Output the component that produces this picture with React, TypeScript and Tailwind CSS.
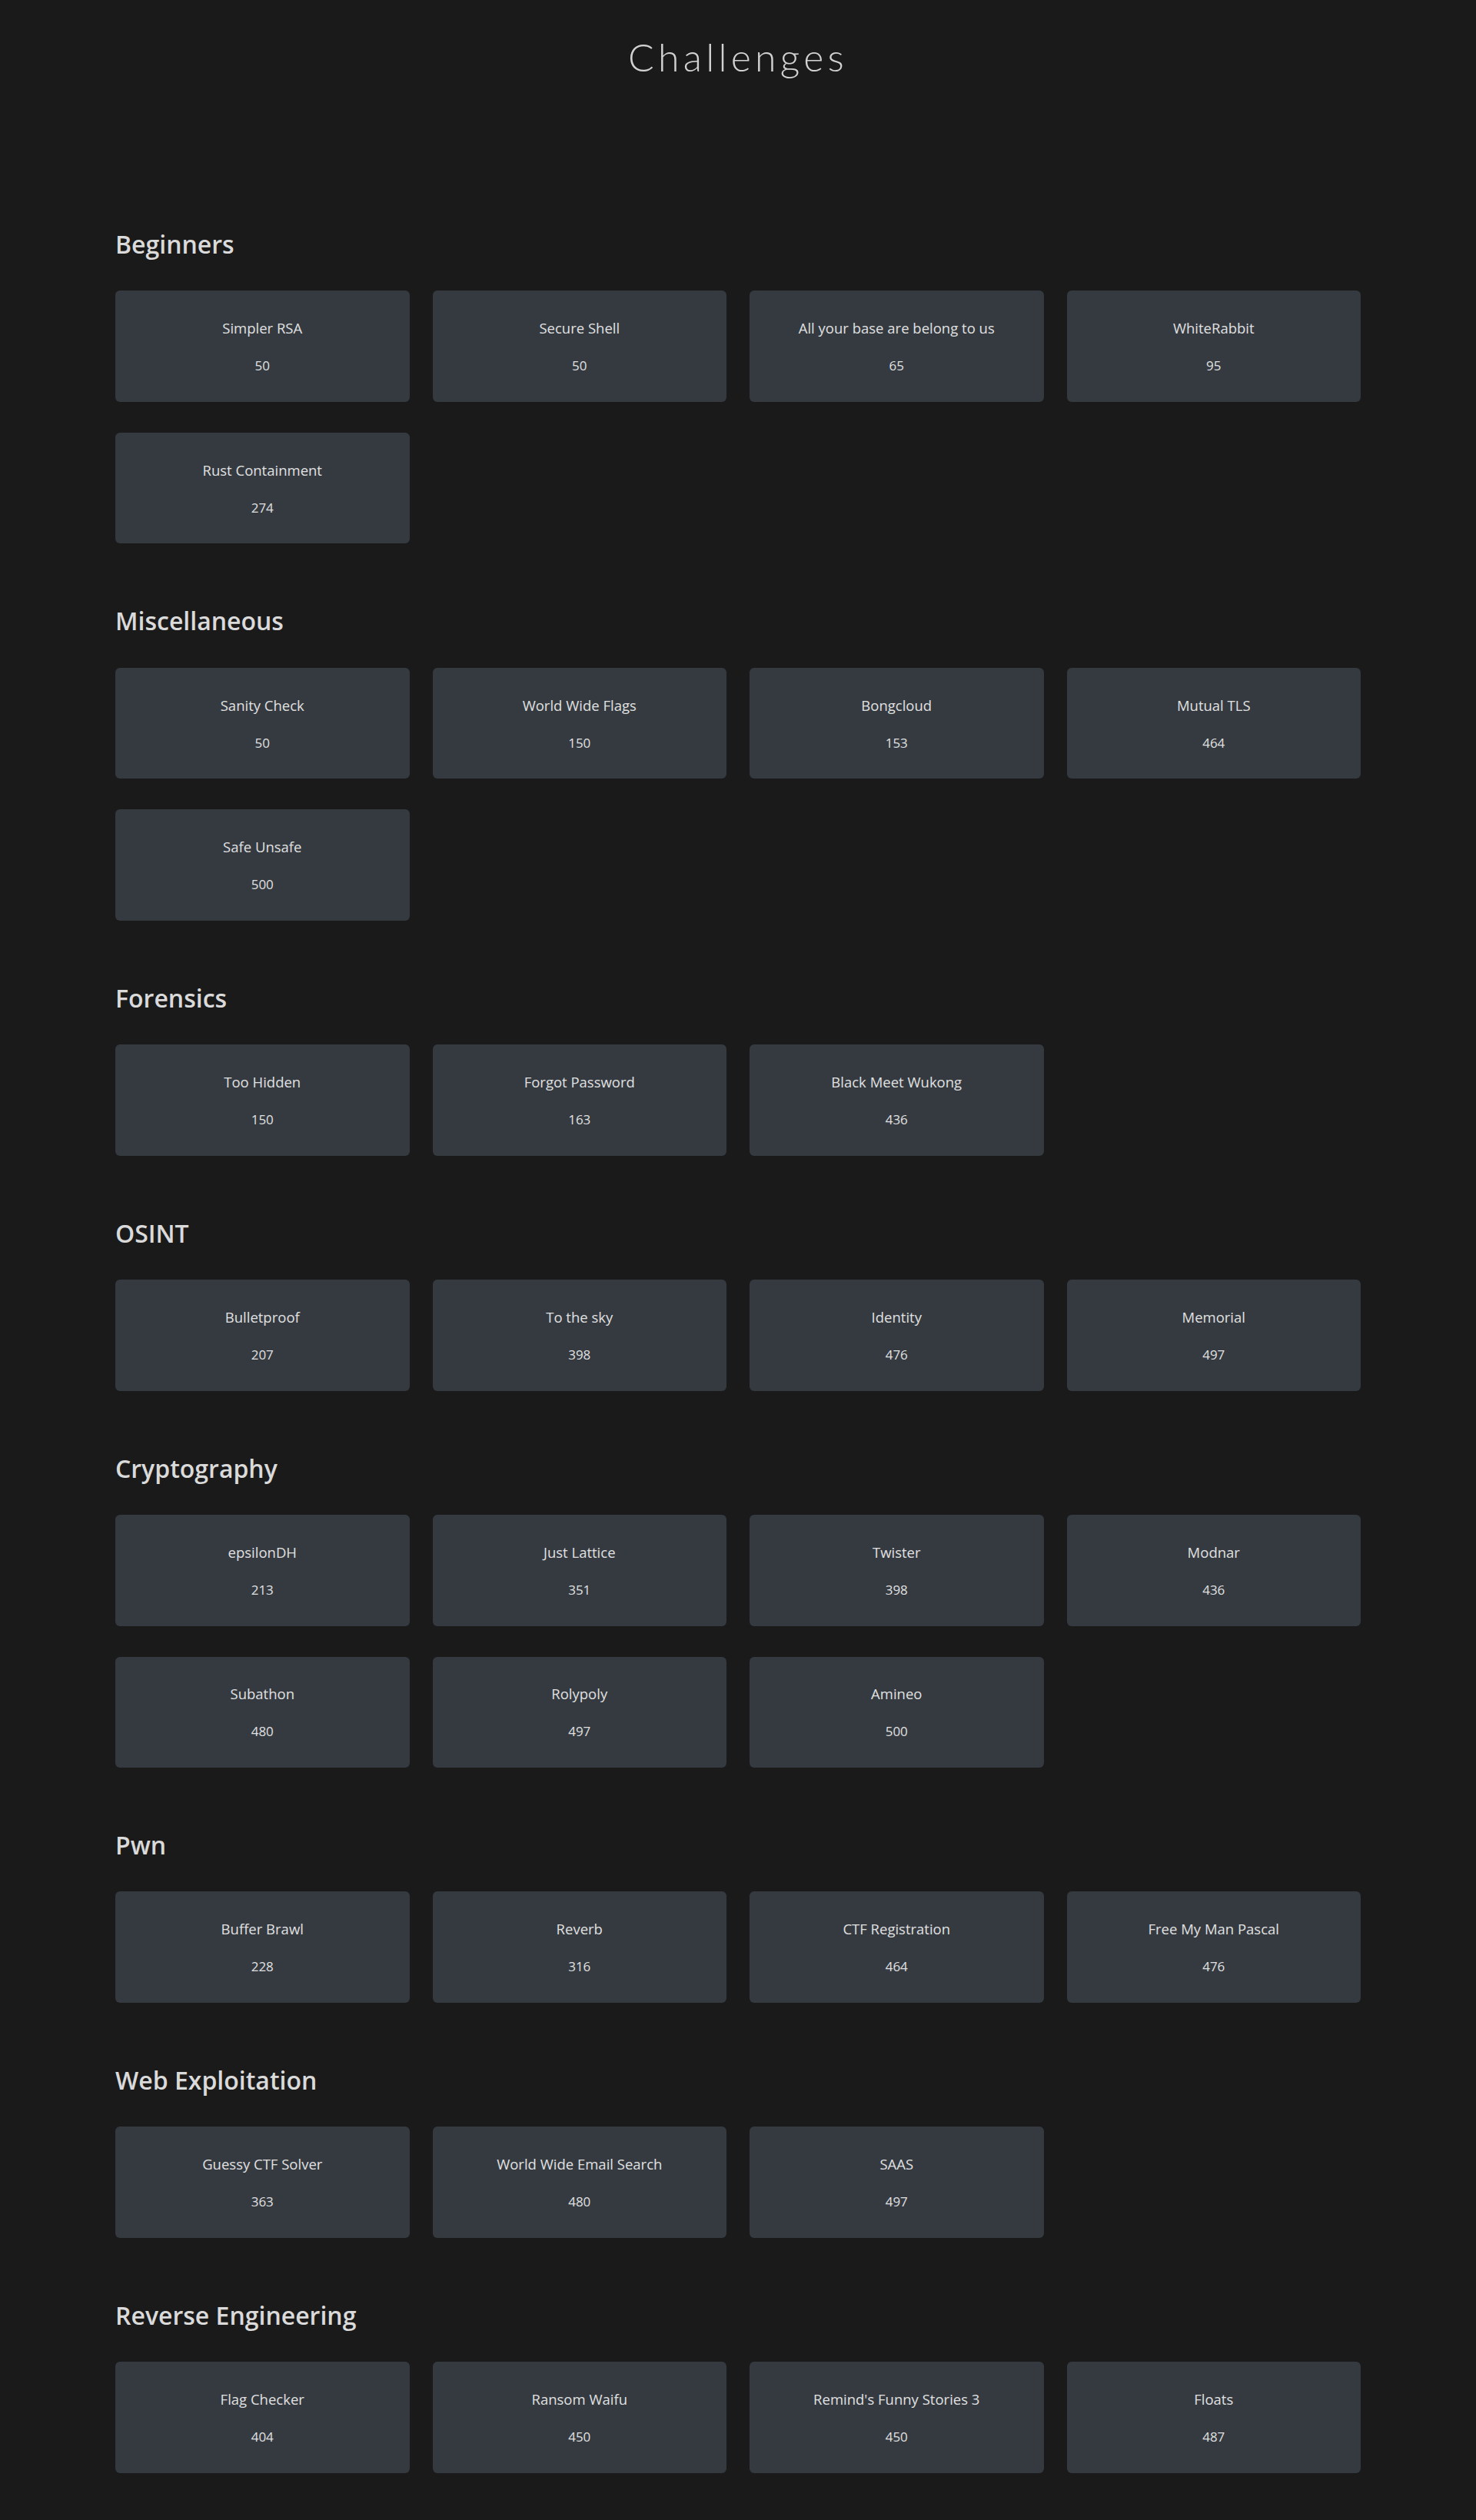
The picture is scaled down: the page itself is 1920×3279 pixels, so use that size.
import React from 'react';

type Challenge = { name: string; value: number };

const CATEGORIES: { title: string; items: Challenge[] }[] = [
  {
    title: 'Beginners',
    items: [
      { name: 'Simpler RSA', value: 50 },
      { name: 'Secure Shell', value: 50 },
      { name: 'All your base are belong to us', value: 65 },
      { name: 'WhiteRabbit', value: 95 },
      { name: 'Rust Containment', value: 274 },
    ],
  },
  {
    title: 'Miscellaneous',
    items: [
      { name: 'Sanity Check', value: 50 },
      { name: 'World Wide Flags', value: 150 },
      { name: 'Bongcloud', value: 153 },
      { name: 'Mutual TLS', value: 464 },
      { name: 'Safe Unsafe', value: 500 },
    ],
  },
  {
    title: 'Forensics',
    items: [
      { name: 'Too Hidden', value: 150 },
      { name: 'Forgot Password', value: 163 },
      { name: 'Black Meet Wukong', value: 436 },
    ],
  },
  {
    title: 'OSINT',
    items: [
      { name: 'Bulletproof', value: 207 },
      { name: 'To the sky', value: 398 },
      { name: 'Identity', value: 476 },
      { name: 'Memorial', value: 497 },
    ],
  },
  {
    title: 'Cryptography',
    items: [
      { name: 'epsilonDH', value: 213 },
      { name: 'Just Lattice', value: 351 },
      { name: 'Twister', value: 398 },
      { name: 'Modnar', value: 436 },
      { name: 'Subathon', value: 480 },
      { name: 'Rolypoly', value: 497 },
      { name: 'Amineo', value: 500 },
    ],
  },
  {
    title: 'Pwn',
    items: [
      { name: 'Buffer Brawl', value: 228 },
      { name: 'Reverb', value: 316 },
      { name: 'CTF Registration', value: 464 },
      { name: 'Free My Man Pascal', value: 476 },
    ],
  },
  {
    title: 'Web Exploitation',
    items: [
      { name: 'Guessy CTF Solver', value: 363 },
      { name: 'World Wide Email Search', value: 480 },
      { name: 'SAAS', value: 497 },
    ],
  },
  {
    title: 'Reverse Engineering',
    items: [
      { name: 'Flag Checker', value: 404 },
      { name: 'Ransom Waifu', value: 450 },
      { name: "Remind's Funny Stories 3", value: 450 },
      { name: 'Floats', value: 487 },
    ],
  },
];

const ChallengeCard = ({ item }: { item: Challenge }) => (
  <button className="h-[144.5px] rounded-md bg-[#343a40] flex flex-col items-center justify-center gap-[23px] text-[#e0e0e0]">
    <span className="text-[18.5px] leading-[27px]">{item.name}</span>
    <span className="text-[17px] leading-[25px]">{item.value}</span>
  </button>
);

export default function App() {
  return (
    <div className="min-h-screen bg-[#1a1a1a] font-['Open_Sans',sans-serif] pb-[63px]">
      <div className="pt-[44px] text-center">
        <h1 className="font-[Lato,sans-serif] text-[50px] leading-[60px] font-light tracking-[0.105em] text-[#d2d2d2]">
          Challenges
        </h1>
      </div>

      <main className="w-[1620px] mx-auto mt-[195px] flex flex-col gap-[82px]">
        {CATEGORIES.map((cat) => (
          <section key={cat.title}>
            <h3 className="text-[32px] leading-[38.4px] font-semibold text-[#dadada] mb-[41px]">{cat.title}</h3>
            <div className="grid grid-cols-4 gap-x-[30px] gap-y-[40px]">
              {cat.items.map((item) => (
                <ChallengeCard key={item.name} item={item} />
              ))}
            </div>
          </section>
        ))}
      </main>
    </div>
  );
}
